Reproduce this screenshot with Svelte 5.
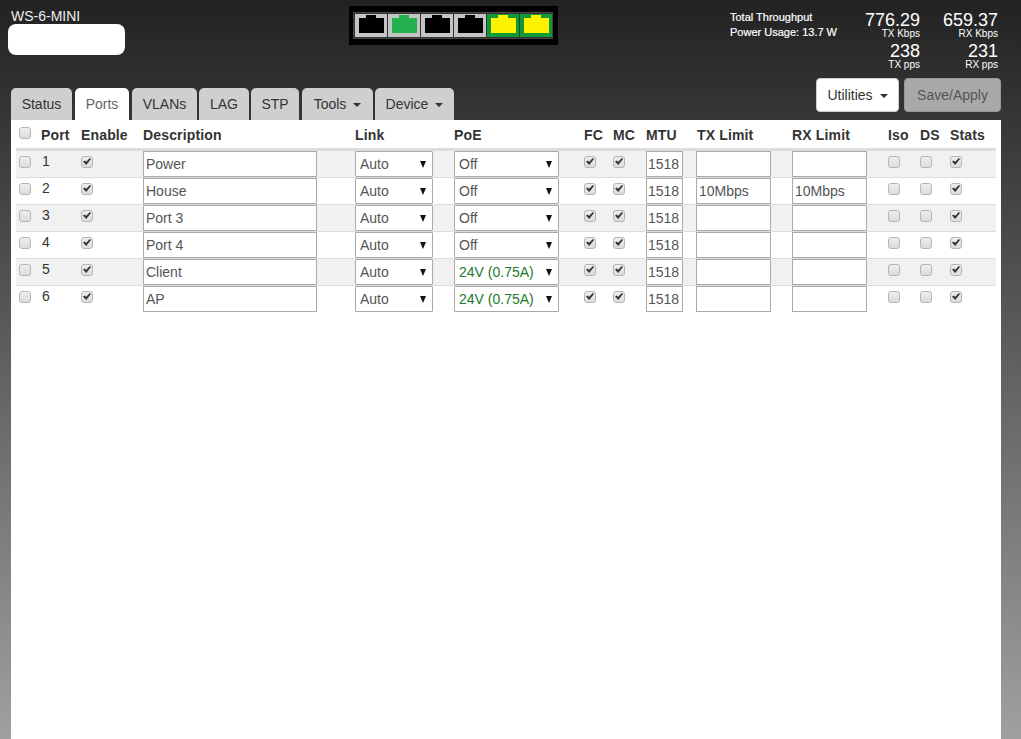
<script>
  const tabs = [
    { label: "Status" },
    { label: "Ports", active: true },
    { label: "VLANs" },
    { label: "LAG" },
    { label: "STP" },
    { label: "Tools", caret: true },
    { label: "Device", caret: true },
  ];

  const leds = ["off", "green", "off", "off", "yellow", "yellow"];

  const ports = [
    { id: 1, name: "Power", poe: "Off", tx: "", rx: "" },
    { id: 2, name: "House", poe: "Off", tx: "10Mbps", rx: "10Mbps" },
    { id: 3, name: "Port 3", poe: "Off", tx: "", rx: "" },
    { id: 4, name: "Port 4", poe: "Off", tx: "", rx: "" },
    { id: 5, name: "Client", poe: "24V (0.75A)", tx: "", rx: "" },
    { id: 6, name: "AP", poe: "24V (0.75A)", tx: "", rx: "" },
  ];
</script>

<div class="page">
  <header class="top">
    <div class="device">
      <div class="model">WS-6-MINI</div>
      <div class="blank"></div>
    </div>

    <div class="panel">
      <div class="panel-inner">
        {#each leds as led}
          <svg class="jack" width="32" height="23" viewBox="0 0 32 23">
            <rect width="32" height="23" class={led === "yellow" ? "frame-on" : "frame"} />
            <path class={led} d="M4 4H11V1H21V4H29V19H4Z" />
          </svg>
        {/each}
      </div>
    </div>

    <div class="stats">
      <div class="totals">
        <div>Total Throughput</div>
        <div>Power Usage: 13.7 W</div>
      </div>
      <div class="figures">
        <div class="fig"><b>776.29</b><span>TX Kbps</span></div>
        <div class="fig"><b>659.37</b><span>RX Kbps</span></div>
        <div class="fig"><b>238</b><span>TX pps</span></div>
        <div class="fig"><b>231</b><span>RX pps</span></div>
      </div>
    </div>
  </header>

  <div class="toolbar">
    <nav class="tabs">
      {#each tabs as tab}
        <div class="tab" class:active={tab.active}>
          {tab.label}{#if tab.caret}<i class="caret"></i>{/if}
        </div>
      {/each}
    </nav>
    <div class="actions">
      <button class="btn">Utilities<i class="caret"></i></button>
      <button class="btn save">Save/Apply</button>
    </div>
  </div>

  <main class="content">
    <table>
      <thead>
        <tr>
          <th class="c-sel"><input class="first" type="checkbox" /></th>
          <th class="c-port">Port</th>
          <th class="c-en">Enable</th>
          <th class="c-desc">Description</th>
          <th class="c-link">Link</th>
          <th class="c-poe">PoE</th>
          <th class="c-fc">FC</th>
          <th class="c-mc">MC</th>
          <th class="c-mtu">MTU</th>
          <th class="c-tx">TX Limit</th>
          <th class="c-rx">RX Limit</th>
          <th class="c-iso">Iso</th>
          <th class="c-ds">DS</th>
          <th class="c-stats">Stats</th>
        </tr>
      </thead>
      <tbody>
        {#each ports as p}
          <tr>
            <td><input class="first" type="checkbox" /></td>
            <td class="num">{p.id}</td>
            <td><input type="checkbox" checked /></td>
            <td><input class="text desc" type="text" value={p.name} /></td>
            <td>
              <div class="select link"><span>Auto</span><i></i></div>
            </td>
            <td>
              <div class="select poe" class:live={p.poe !== "Off"}><span>{p.poe}</span><i></i></div>
            </td>
            <td><input type="checkbox" checked /></td>
            <td><input type="checkbox" checked /></td>
            <td><input class="text mtu" type="text" value="1518" /></td>
            <td><input class="text limit" type="text" value={p.tx} /></td>
            <td><input class="text limit" type="text" value={p.rx} /></td>
            <td><input type="checkbox" /></td>
            <td><input type="checkbox" /></td>
            <td><input type="checkbox" checked /></td>
          </tr>
        {/each}
      </tbody>
    </table>
  </main>
</div>

<style>
  :global(body) {
    margin: 0;
  }

  .page {
    height: 739px;
    overflow: hidden;
    display: flex;
    flex-direction: column;
    padding: 0 20px 0 11px;
    box-sizing: border-box;
    font-family: "Liberation Sans", Arial, sans-serif;
    font-size: 14px;
    color: #333;
    background: linear-gradient(#222, #a0a0a0);
  }

  /* header */
  .top {
    height: 74px;
    display: flex;
    color: #fff;
  }

  .device {
    width: 338px;
    flex: none;
  }

  .model {
    margin-top: 9px;
    font-size: 14px;
    line-height: 15px;
    color: #eee;
  }

  .blank {
    width: 117px;
    height: 31px;
    margin: 0 0 0 -3px;
    background: #fff;
    border-radius: 8px;
  }

  .panel {
    margin-top: 6px;
    width: 209px;
    height: 39px;
    flex: none;
    background: #000;
    box-sizing: border-box;
    padding: 6px 4px;
  }

  .panel-inner {
    display: flex;
    gap: 1px;
    height: 27px;
    width: 200px;
    padding: 1px;
    box-sizing: border-box;
    border: 1px solid #444;
    background: #333;
  }

  .jack {
    display: block;
    flex: none;
  }

  .frame {
    fill: #c4c4c4;
  }

  .frame-on {
    fill: #0f9a38;
  }

  .off {
    fill: #000;
  }

  .green {
    fill: #22b14c;
  }

  .yellow {
    fill: #fff200;
  }

  .stats {
    margin-left: 172px;
    display: flex;
    flex: none;
  }

  .totals {
    width: 128px;
    margin-top: 10px;
    font-size: 11px;
    line-height: 15px;
    -webkit-text-stroke: 0.2px #fff;
  }

  .figures {
    width: 140px;
    display: grid;
    grid-template-columns: 62px 78px;
    margin-top: 11px;
    align-content: start;
    text-align: right;
  }

  .fig {
    display: flex;
    flex-direction: column;
    height: 31px;
  }

  .fig b {
    font-size: 18px;
    font-weight: 400;
    line-height: 18px;
  }

  .fig span {
    font-size: 10px;
    line-height: 10px;
  }

  /* tabs row */
  .toolbar {
    height: 46px;
    display: flex;
    justify-content: space-between;
    align-items: flex-end;
  }

  .tabs {
    display: flex;
    gap: 2px;
    padding-top: 14px;
  }

  .tab {
    height: 32px;
    box-sizing: border-box;
    padding-top: 8px;
    line-height: 17px;
    text-align: center;
    background: #cfcfcf;
    color: #333;
    border-radius: 5px 5px 0 0;
  }

  .tab:nth-child(1) { width: 61px; margin-right: 1px; }
  .tab:nth-child(2) { width: 54px; margin-right: 1px; }
  .tab:nth-child(3) { width: 65px; }
  .tab:nth-child(4) { width: 50px; }
  .tab:nth-child(5) { width: 48px; margin-right: 1px; }
  .tab:nth-child(6) { width: 71px; }
  .tab:nth-child(7) { width: 79px; }

  .tab.active {
    background: #fff;
    color: #666;
  }

  .caret {
    display: inline-block;
    width: 0;
    height: 0;
    margin-left: 7px;
    vertical-align: middle;
    border-top: 4px solid;
    border-left: 4px solid transparent;
    border-right: 4px solid transparent;
  }

  .actions {
    display: flex;
    gap: 5px;
    align-self: flex-start;
    margin-top: 4px;
  }

  .btn {
    width: 83px;
    height: 34px;
    box-sizing: border-box;
    padding: 0;
    font: inherit;
    color: #333;
    background: #fff;
    border: 1px solid #ccc;
    border-radius: 4px;
  }

  .save {
    width: 97px;
    color: #555;
    background: #a9a9a9;
    border-color: #999;
  }

  /* table */
  .content {
    flex: 1;
    background: #fff;
    padding: 0 5px;
  }

  table {
    width: 980px;
    border-collapse: separate;
    border-spacing: 0;
    table-layout: fixed;
  }

  th,
  td {
    box-sizing: border-box;
    padding: 0;
    vertical-align: top;
  }

  th {
    height: 31px;
    padding-top: 7px;
    font-size: 14px;
    line-height: 17px;
    letter-spacing: 0.15px;
    text-align: left;
    color: #333;
    border-bottom: 3px solid #ddd;
  }

  td {
    height: 27px;
    border-bottom: 1px solid #ddd;
  }

  tbody tr:last-child td {
    border-bottom: 0;
  }

  tbody tr:nth-child(odd) td {
    background: #f1f1f1;
  }

  .c-sel { width: 25px; }
  .c-port { width: 40px; }
  .c-en { width: 62px; }
  .c-desc { width: 212px; }
  .c-link { width: 99px; }
  .c-poe { width: 130px; }
  .c-fc { width: 29px; }
  .c-mc { width: 33px; }
  .c-mtu { width: 50px; }
  .c-tx { width: 96px; padding-left: 1px; }
  .c-rx { width: 96px; }
  .c-iso { width: 32px; }
  .c-ds { width: 30px; }
  .c-stats { width: 46px; }

  input[type="checkbox"] {
    appearance: none;
    display: block;
    width: 12px;
    height: 12px;
    margin: 5px 0 0;
    box-sizing: border-box;
    border: 1px solid #b5b5b5;
    border-radius: 3px;
    background: linear-gradient(#eee, #dcdcdc);
    position: relative;
  }

  input[type="checkbox"]:checked::after {
    content: "";
    position: absolute;
    left: 1px;
    top: 1px;
    width: 8px;
    height: 7px;
    background: #333;
    clip-path: polygon(0 50%, 25% 35%, 38% 58%, 85% 0, 100% 15%, 40% 100%);
  }

  input.first {
    margin-left: 3px;
  }

  th input[type="checkbox"] {
    margin-top: 0;
  }

  .num {
    padding-top: 2px;
    padding-left: 1px;
    line-height: 17px;
  }

  .text,
  .select {
    box-sizing: border-box;
    height: 26px;
    margin: 0;
    border: 1px solid #aaa;
    background: #fff;
    font: inherit;
    color: #555;
    display: block;
  }

  .text {
    padding: 0 0 0 2px;
  }

  .text:focus {
    outline: 0;
  }

  .desc {
    width: 174px;
  }

  .mtu {
    width: 37px;
    padding-left: 1px;
  }

  .limit {
    width: 75px;
  }

  .select {
    display: flex;
    justify-content: space-between;
    align-items: center;
    padding: 0 6px 0 4px;
    border-radius: 1px;
  }

  .select i {
    width: 0;
    height: 0;
    border-top: 7px solid #111;
    border-left: 3.5px solid transparent;
    border-right: 3.5px solid transparent;
  }

  .link {
    width: 78px;
  }

  .poe {
    width: 105px;
  }

  .live span {
    color: #1d7a2c;
  }
</style>
